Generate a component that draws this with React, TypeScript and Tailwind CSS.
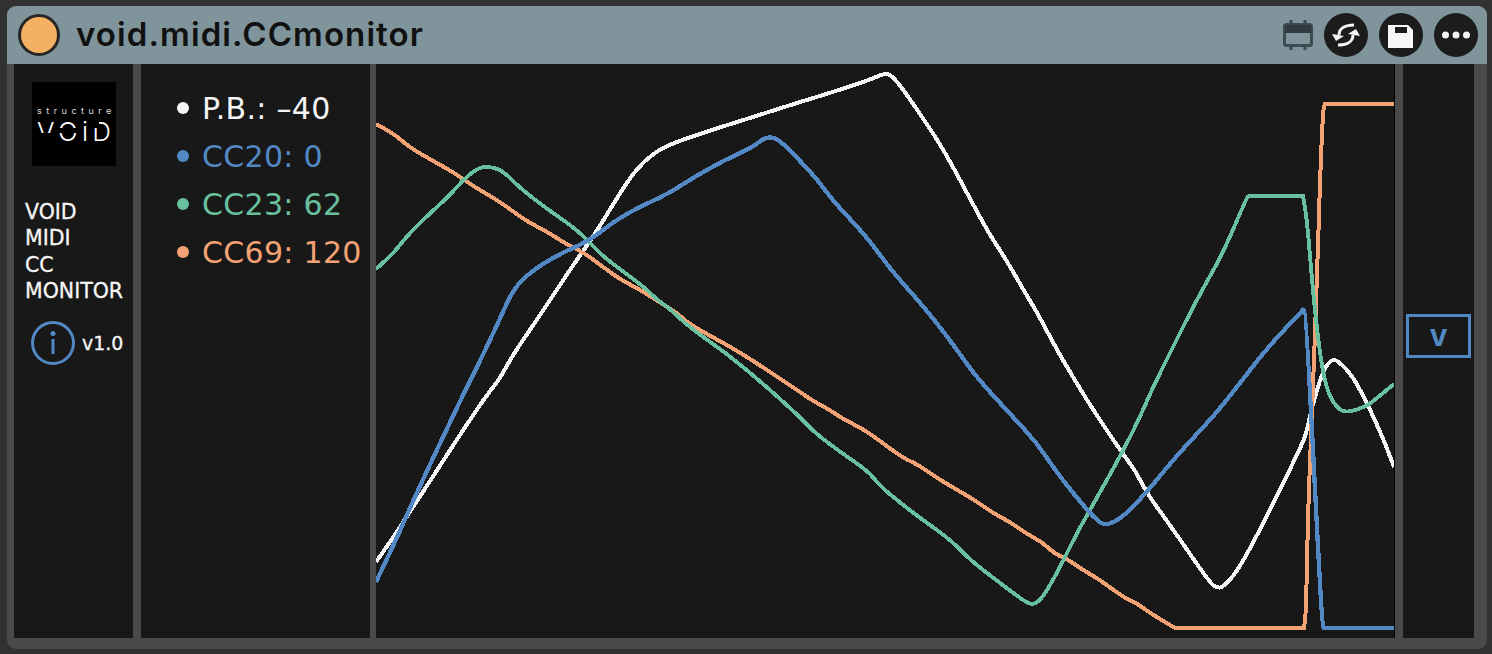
const UI_FONT = "font-['DejaVu_Sans',sans-serif]";

const WHITE_LINE =
  "376,562 393,538 409,513 436,472 463,430 489,392 499,380 514,353 543,311 569,271 593,237 609,211 629,179 644,161 663,147 699,134 753,117 800,102 820,96 867,81 885,73 892,76 903,89 937,139 953,167 973,204 988,232 1007,261 1027,296 1038,314 1057,350 1073,377 1090,405 1120,450 1135,470 1148,495 1170,525 1210,583 1217,588 1223,587 1237,572 1260,530 1303,443 1307,430 1312,407 1323,370 1332,359 1338,361 1352,375 1367,403 1383,438 1394,467";
const BLUE_LINE =
  "376,582 396,540 409,510 426,473 443,437 464,393 484,353 503,312 511,294 524,277 553,257 589,241 613,222 639,207 666,195 696,176 723,161 753,147 764,138 774,137 786,146 800,161 817,179 833,201 867,237 890,269 917,299 940,327 957,350 977,378 1013,417 1037,443 1057,473 1087,510 1100,523 1107,525 1122,518 1147,492 1177,455 1213,417 1237,387 1267,348 1303,310 1303,310 1306,312 1322,627 1324,628 1324,628 1394,628";
const GREEN_LINE =
  "376,269 393,254 406,237 426,217 449,196 464,179 479,167 493,167 504,172 519,187 543,206 576,229 593,246 606,259 643,286 656,299 669,308 689,327 726,353 760,381 800,417 815,433 843,454 868,471 880,486 903,505 923,520 952,541 970,560 1000,583 1028,604 1035,604 1043,597 1057,573 1077,533 1090,510 1122,453 1140,417 1153,387 1190,313 1205,285 1223,253 1247,197 1249,196 1249,196 1303,196 1303,196 1307,220 1312,280 1317,330 1322,367 1328,393 1337,408 1347,413 1367,406 1377,398 1394,384";
const ORANGE_LINE =
  "376,124 393,133 409,147 433,161 453,172 476,188 499,201 526,221 546,231 566,244 583,252 603,267 621,280 639,289 659,302 676,312 689,324 716,339 741,353 770,372 800,392 813,401 830,410 843,419 863,429 880,441 903,458 917,464 943,482 970,497 993,513 1010,522 1027,534 1042,542 1055,554 1067,559 1083,570 1100,580 1123,597 1138,604 1150,613 1175,628 1175,628 1304,628 1304,628 1306,613 1308,513 1312,413 1317,280 1320,180 1323,110 1325,104 1325,104 1394,104";

// rounds the hand-read points off by cutting each corner at the segment midpoints
function smooth(points: string) {
  const pts = points.split(" ").map((p) => p.split(",").map(Number));
  let d = `M${pts[0][0]} ${pts[0][1]}`;
  for (let i = 1; i < pts.length - 1; i++) {
    const midX = (pts[i][0] + pts[i + 1][0]) / 2;
    const midY = (pts[i][1] + pts[i + 1][1]) / 2;
    d += `Q${pts[i][0]} ${pts[i][1]} ${midX} ${midY}`;
  }
  const last = pts[pts.length - 1];
  return `${d}L${last[0]} ${last[1]}`;
}

const legend = [
  { label: "P.B.: –40", dot: "bg-[#f4f4f4]", text: "text-[#f4f4f4]" },
  { label: "CC20: 0", dot: "bg-[#5288c4]", text: "text-[#5288c4]" },
  { label: "CC23: 62", dot: "bg-[#68c09e]", text: "text-[#68c09e]" },
  { label: "CC69: 120", dot: "bg-[#f3a273]", text: "text-[#f3a273]" },
];

function CalendarIcon() {
  return (
    <svg width="30" height="30" viewBox="0 0 30 30" fill="none">
      <rect x="1.5" y="4.5" width="27" height="21" rx="2" stroke="#3c4b51" strokeWidth="3" />
      <rect x="2" y="5" width="26" height="8" fill="#2f3b40" />
      <path d="M8 0v5M22 0v5M8 26v4M22 26v4" stroke="#3c4b51" strokeWidth="3" />
    </svg>
  );
}

function SyncIcon() {
  return (
    <svg width="44" height="44" viewBox="0 0 44 44">
      <circle cx="22" cy="22" r="22" fill="#1c1c1c" />
      <path d="M15 22C15 15 22 12 30 12" fill="none" stroke="#f4f4f4" strokeWidth="3" />
      <path d="M8 21l12 2-8 5z" fill="#f4f4f4" />
      <path d="M29 22C29 29 22 32 14 32" fill="none" stroke="#f4f4f4" strokeWidth="3" />
      <path d="M36 23l-12-2 8-5z" fill="#f4f4f4" />
    </svg>
  );
}

function SaveIcon() {
  return (
    <svg width="44" height="44" viewBox="0 0 44 44">
      <circle cx="22" cy="22" r="22" fill="#1c1c1c" />
      <path d="M9 12h20l5 5v18H9z" fill="#f7f7f7" />
      <rect x="16" y="14" width="12" height="6" fill="#1c1c1c" />
    </svg>
  );
}

function MoreIcon() {
  return (
    <svg width="44" height="44" viewBox="0 0 44 44">
      <circle cx="22" cy="22" r="22" fill="#1c1c1c" />
      <circle cx="11.5" cy="22" r="3.5" fill="#f4f4f4" />
      <circle cx="22" cy="22" r="3.5" fill="#f4f4f4" />
      <circle cx="32.5" cy="22" r="3.5" fill="#f4f4f4" />
    </svg>
  );
}

function VoidLogo() {
  return (
    <svg width="84" height="84" viewBox="0 0 84 84">
      <rect width="84" height="84" fill="#000" />
      <text x="5" y="32" fontFamily="Inter, sans-serif" fontSize="9" letterSpacing="4.5" fill="#ddd">
        structure
      </text>
      <text x="5" y="59" fontFamily="Inter, sans-serif" fontWeight="300" fontSize="26" letterSpacing="4.3" fill="#fff">
        VOiD
      </text>
      <rect x="5" y="51" width="21" height="9" fill="#000" />
      <rect x="26" y="46" width="22" height="5" fill="#000" />
      <rect x="61" y="40" width="6" height="6" fill="#000" />
    </svg>
  );
}

function InfoIcon() {
  return (
    <svg width="44" height="44" viewBox="0 0 44 44">
      <circle cx="22" cy="22" r="20.5" fill="none" stroke="#5288c4" strokeWidth="3" />
      <circle cx="22" cy="12.5" r="2.5" fill="#5288c4" />
      <rect x="20.5" y="18" width="3" height="15" fill="#5288c4" />
    </svg>
  );
}

export default function App() {
  return (
    <div className="h-screen w-full overflow-hidden bg-[#323232] pt-[6px] pr-[5px] pb-[5px] pl-[7px]">
      <div className="flex h-full flex-col overflow-hidden rounded-[9px] bg-[#4a4a4a]">
        <div className="flex h-[58px] shrink-0 items-center bg-[#7f949b] pr-[9px] pl-[11px]">
          <div className="h-[42px] w-[42px] rounded-full border-[3px] border-[#262626] bg-[#f4b163]" />
          <div className="ml-[16px] font-['Inter',sans-serif] text-[33px] font-semibold tracking-[1.1px] text-[#111]">
            void.midi.CCmonitor
          </div>
          <div className="ml-auto flex items-center">
            <CalendarIcon />
            <div className="ml-[11px] flex gap-[11px]">
              <SyncIcon />
              <SaveIcon />
              <MoreIcon />
            </div>
          </div>
        </div>

        <div className="flex min-h-0 flex-1 pr-[13px] pb-[11px] pl-[7px]">
          <div className={`flex w-[119px] flex-col bg-[#181818] pt-[18px] ${UI_FONT}`}>
            <div className="ml-[18px]">
              <VoidLogo />
            </div>
            <div className="mt-[33px] ml-[11px] text-[20.5px] leading-[26.3px] text-[#f6f6f6] [-webkit-text-stroke:0.3px_#f6f6f6]">
              <div>VOID</div>
              <div>MIDI</div>
              <div>CC</div>
              <div>MONITOR</div>
            </div>
            <div className="mt-[17px] ml-[17px] flex items-center gap-[7px]">
              <InfoIcon />
              <span className="text-[19px] text-[#f6f6f6] [-webkit-text-stroke:0.3px_#f6f6f6]">v1.0</span>
            </div>
          </div>

          <div className={`ml-[8px] flex w-[229px] flex-col bg-[#181818] pt-[20px] pl-[36px] ${UI_FONT}`}>
            {legend.map((row) => (
              <div key={row.label} className="flex h-[48px] items-center gap-[13px]">
                <span className={`h-[12px] w-[12px] rounded-full ${row.dot}`} />
                <span className={`text-[30px] tracking-[0.3px] whitespace-nowrap ${row.text}`}>{row.label}</span>
              </div>
            ))}
          </div>

          <div className="ml-[6px] w-[1019px] border-r border-black bg-[#181818]">
            <svg width="1018" height="574" viewBox="376 64 1018 574" fill="none" shapeRendering="crispEdges">
              <path d={smooth(WHITE_LINE)} stroke="#f5f5f5" strokeWidth="4" />
              <path d={smooth(ORANGE_LINE)} stroke="#f3a273" strokeWidth="4" />
              <path d={smooth(GREEN_LINE)} stroke="#68c09e" strokeWidth="3.9" />
              <path d={smooth(BLUE_LINE)} stroke="#5288c4" strokeWidth="4.3" />
            </svg>
          </div>

          <div className="ml-[8px] w-[71px] bg-[#181818] pt-[250px] pl-[3px]">
            <div className="flex h-[44px] w-[65px] items-center justify-center border-[3px] border-[#5288c4] font-['Liberation_Sans',sans-serif] text-[31px] font-bold text-[#5288c4]">
              v
            </div>
          </div>
        </div>
      </div>
    </div>
  );
}
